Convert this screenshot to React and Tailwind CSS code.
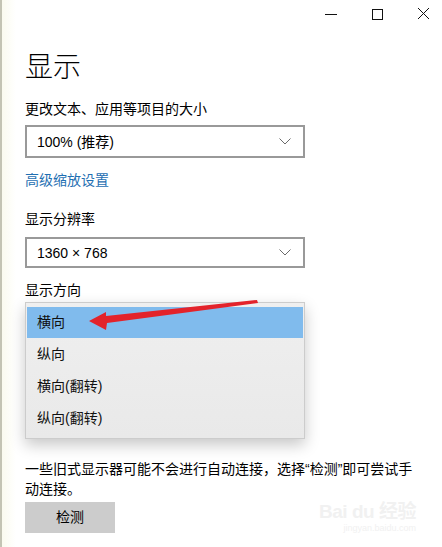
import React from "react";

const font = "font-['Liberation_Sans','Noto_Sans_CJK_SC',sans-serif]";

const Chevron = () => (
  <svg width="12" height="7" viewBox="0 0 12 7" className="shrink-0">
    <path d="M0.5 0.5 L6 6 L11.5 0.5" fill="none" stroke="#6b6b6b" strokeWidth="1" />
  </svg>
);

const Select = ({ value, h = "h-[33px]" }) => (
  <div
    className={`${h} w-[280px] border-2 border-[#999999] bg-white flex items-center justify-between pl-[10px] pr-[12px]`}
  >
    <span className="text-[14px] text-black leading-none">{value}</span>
    <Chevron />
  </div>
);

const options = ["横向", "纵向", "横向(翻转)", "纵向(翻转)"];

export default function App() {
  return (
    <div
      className={`relative w-[442px] h-[547px] overflow-hidden bg-white border-l-2 border-[#c4c4b4] ${font}`}
    >
      {/* faint warm edge */}
      <div className="absolute inset-y-0 left-0 w-[14px] bg-gradient-to-r from-[#fbfbef] to-white" />

      {/* title bar */}
      <div className="relative flex justify-end items-center h-[27px] pr-[12px] gap-[34px]">
        <svg width="12" height="12" viewBox="0 0 12 12">
          <path d="M0 6.5 H12" stroke="#111" strokeWidth="1" />
        </svg>
        <svg width="12" height="12" viewBox="0 0 12 12">
          <rect x="1.5" y="1.5" width="10" height="10" fill="none" stroke="#111" strokeWidth="1" />
        </svg>
        <svg width="13" height="13" viewBox="0 0 13 13">
          <path d="M1 1 L12 12 M12 1 L1 12" stroke="#111" strokeWidth="1" />
        </svg>
      </div>

      <div className="relative pl-[23px]">
        <h1 className="mt-[21px] text-[28px] leading-[40px] text-black font-light">显示</h1>

        <p className="mt-[11px] text-[14px] leading-[20px] text-black">更改文本、应用等项目的大小</p>
        <div className="mt-[6px]">
          <Select value="100% (推荐)" />
        </div>

        <p className="mt-[12px] text-[14px] leading-[20px] text-[#1f6fb2]">高级缩放设置</p>

        <p className="mt-[19px] text-[14px] leading-[20px] text-black">显示分辨率</p>
        <div className="mt-[8px]">
          <Select value="1360 × 768" h="h-[31px]" />
        </div>

        <p className="mt-[12px] text-[14px] leading-[20px] text-black">显示方向</p>

        {/* open orientation menu */}
        <div className="mt-[2px] w-[280px] h-[137px] bg-gradient-to-b from-[#efefef] to-[#e9e9e9] border border-[#cccccc] shadow-[0_6px_14px_rgba(0,0,0,0.22)] pt-[4px] px-[1px]">
          {options.map((o, i) => (
            <div
              key={o}
              className={`flex items-center pl-[10px] text-[14px] text-[#111] ${
                i === 0 ? "bg-[#80bbed] h-[31px]" : "h-[32px]"
              }`}
            >
              {o}
            </div>
          ))}
        </div>

        <p className="mt-[20px] max-w-[395px] text-[14px] leading-[20px] text-black">
          一些旧式显示器可能不会进行自动连接，选择“检测”即可尝试手动连接。
        </p>

        <button className="mt-[3px] w-[90px] h-[31px] bg-[#cccccc] text-[14px] text-black flex items-center justify-center">
          检测
        </button>
      </div>

      {/* red annotation arrow */}
      <svg className="absolute left-0 top-0 pointer-events-none" width="442" height="547">
        <polygon
          points="87,321 104,312 104,316 255,300 256,303 105,323 104,330"
          fill="#e3232b"
        />
      </svg>

      {/* watermark */}
      <div className="absolute right-[26px] bottom-[14px] flex flex-col items-end text-[#f1f1f1] leading-none">
        <span className="text-[19px] font-bold tracking-tight">Bai du 经验</span>
        <span className="text-[9px] mt-[3px]">jingyan.baidu.com</span>
      </div>
    </div>
  );
}
